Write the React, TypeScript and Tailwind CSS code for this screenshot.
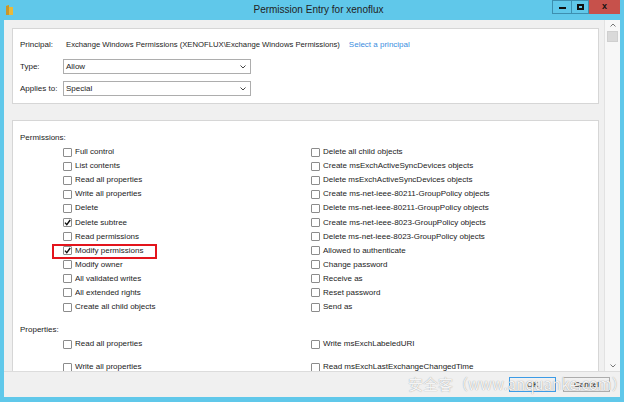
import { Fragment } from 'react';

const leftPerms: [string, boolean][] = [
  ['Full control', false],
  ['List contents', false],
  ['Read all properties', false],
  ['Write all properties', false],
  ['Delete', false],
  ['Delete subtree', true],
  ['Read permissions', false],
  ['Modify permissions', true],
  ['Modify owner', false],
  ['All validated writes', false],
  ['All extended rights', false],
  ['Create all child objects', false]
];

const rightPerms = [
  'Delete all child objects',
  'Create msExchActiveSyncDevices objects',
  'Delete msExchActiveSyncDevices objects',
  'Create ms-net-ieee-80211-GroupPolicy objects',
  'Delete ms-net-ieee-80211-GroupPolicy objects',
  'Create ms-net-ieee-8023-GroupPolicy objects',
  'Delete ms-net-ieee-8023-GroupPolicy objects',
  'Allowed to authenticate',
  'Change password',
  'Receive as',
  'Reset password',
  'Send as'
];

function Check({ checked, label, highlight }: { checked?: boolean; label: string; highlight?: boolean }) {
  return (
    <div className="relative flex items-center h-[14.1px] whitespace-nowrap">
      <span className="w-[9px] h-[9px] border border-[#8c8c8c] bg-white rounded-[1px] flex items-center justify-center shrink-0">
        {checked && (
          <svg width="7" height="7" viewBox="0 0 7 7">
            <path d="M1 3.6 L2.8 5.6 L6.2 1" fill="none" stroke="#111" strokeWidth="1.4" />
          </svg>
        )}
      </span>
      <span className="ml-[3px]">{label}</span>
      {highlight && (
        <span className="absolute left-[-11px] top-0 w-[105px] h-[15px] border-2 border-[#e3141c] pointer-events-none" />
      )}
    </div>
  );
}

function Select({ value }: { value: string }) {
  return (
    <div className="w-[188px] h-[15px] border border-[#adadad] bg-white flex items-center justify-between pl-[2px] pr-[4px]">
      <span>{value}</span>
      <svg width="6" height="4" viewBox="0 0 6 4">
        <path d="M0.5 0.5 L3 3 L5.5 0.5" fill="none" stroke="#444" strokeWidth="1" />
      </svg>
    </div>
  );
}

export default function App() {
  return (
    <div className="relative w-[624px] h-[402px] overflow-hidden bg-[#60c8ea] flex flex-col font-['Liberation_Sans',Arial,sans-serif] text-[8px] text-[#1b1b1b]">
      {/* title bar */}
      <div className="h-[20px] flex items-start shrink-0">
        <svg className="mt-[5px] ml-[6px]" width="7" height="10" viewBox="0 0 7 10">
          <path d="M0 1 L3 0 L3 2 L7 2 L7 10 L0 10 Z" fill="#e8b93a" />
          <path d="M0 1 L3 0 L3 10 L0 10 Z" fill="#c9962a" />
        </svg>
        <div className="flex-1 text-center text-[10px] leading-[20px] text-[#222] pl-[72px]">Permission Entry for xenoflux</div>
        <div className="flex h-[14px] mr-[4px]">
          <div className="w-[19px] h-[14px] border border-[#3d8fb0] border-r-0 flex items-end justify-center pb-[4px]">
            <span className="w-[7px] h-[2px] bg-[#111]" />
          </div>
          <div className="w-[18px] h-[14px] border border-[#3d8fb0] flex items-center justify-center">
            <span className="w-[7px] h-[6px] border-2 border-[#111] border-t-[2px]" />
          </div>
          <div className="w-[31px] h-[14px] bg-[#c7514b] flex items-center justify-center text-[9px] font-bold text-[#111]">x</div>
        </div>
      </div>

      {/* client */}
      <div className="flex-1 flex flex-col mx-[4px] mb-[5px] bg-[#f0f0f0] min-h-0">
        <div className="flex flex-1 min-h-0">
          <div className="flex-1 overflow-hidden pl-[8px] pr-[5px] pt-[8px] flex flex-col gap-[16px]">
            {/* principal panel */}
            <div className="bg-white border border-[#d6d6d6] pl-[7px] pt-[9px] pb-[7px] flex flex-col gap-y-[7px] shrink-0">
              <div className="flex items-center h-[14px]">
                <span className="w-[43px]">Principal:</span>
                <span className="pl-[3px] text-[7.7px]">Exchange Windows Permissions (XENOFLUX\Exchange Windows Permissions)</span>
                <span className="ml-[9px] text-[#3a8ee0]">Select a principal</span>
              </div>
              <div className="flex items-center">
                <span className="w-[43px]">Type:</span>
                <Select value="Allow" />
              </div>
              <div className="flex items-center">
                <span className="w-[43px]">Applies to:</span>
                <Select value="Special" />
              </div>
            </div>

            {/* permissions panel */}
            <div className="bg-white border border-[#d6d6d6] pl-[7px] pt-[9px] flex-1 flex flex-col">
              <div className="h-[15px] flex items-center">Permissions:</div>
              <div className="grid grid-cols-[248px_1fr] pl-[43px]">
                <div className="flex flex-col">
                  {leftPerms.map(([l, c]) => (
                    <Check key={l} label={l} checked={c} highlight={l === 'Modify permissions'} />
                  ))}
                </div>
                <div className="flex flex-col">
                  {rightPerms.map((l) => (
                    <Check key={l} label={l} />
                  ))}
                </div>
              </div>
              <div className="h-[14px] flex items-center mt-[9px]">Properties:</div>
              <div className="grid grid-cols-[248px_1fr] pl-[43px] gap-y-[9px]">
                {[
                  ['Read all properties', 'Write msExchLabeledURI'],
                  ['Write all properties', 'Read msExchLastExchangeChangedTime']
                ].map(([a, b]) => (
                  <Fragment key={a}>
                    <Check label={a} />
                    <Check label={b} />
                  </Fragment>
                ))}
              </div>
            </div>
          </div>

          {/* scrollbar */}
          <div className="w-[16px] bg-[#f7f7f7] border-l border-[#e2e2e2] flex flex-col items-center">
            <div className="h-[10px] flex items-center justify-center">
              <svg width="6" height="4" viewBox="0 0 6 4">
                <path d="M0.5 3.5 L3 1 L5.5 3.5" fill="none" stroke="#777" strokeWidth="1" />
              </svg>
            </div>
            <div className="w-[11px] h-[11px] bg-[#d9d9d9] border border-[#cfcfcf] mt-[1px]" />
            <div className="flex-1" />
            <div className="h-[10px] flex items-center justify-center">
              <svg width="6" height="4" viewBox="0 0 6 4">
                <path d="M0.5 0.5 L3 3 L5.5 0.5" fill="none" stroke="#777" strokeWidth="1" />
              </svg>
            </div>
          </div>
        </div>

        {/* buttons */}
        <div className="h-[26px] shrink-0 border-t border-[#dcdcdc] flex items-start justify-end pt-[5px] pr-[10px] gap-[7px]">
          <button className="w-[47px] h-[15px] border border-[#3c9be6] bg-gradient-to-b from-[#f2f2f2] to-[#e3e3e3] text-[8px]">OK</button>
          <button className="w-[47px] h-[15px] border border-[#acacac] bg-gradient-to-b from-[#f2f2f2] to-[#e3e3e3] text-[8px]">Cancel</button>
        </div>
      </div>

      {/* watermark */}
      <div className="absolute left-[408px] top-[375px] text-[15px] leading-[18px] text-white/90 font-['Noto_Sans_CJK_SC',sans-serif] whitespace-nowrap [text-shadow:0_0_1px_rgba(0,0,0,0.45)]">
        安全客（www.anquanke.com）
      </div>
    </div>
  );
}
